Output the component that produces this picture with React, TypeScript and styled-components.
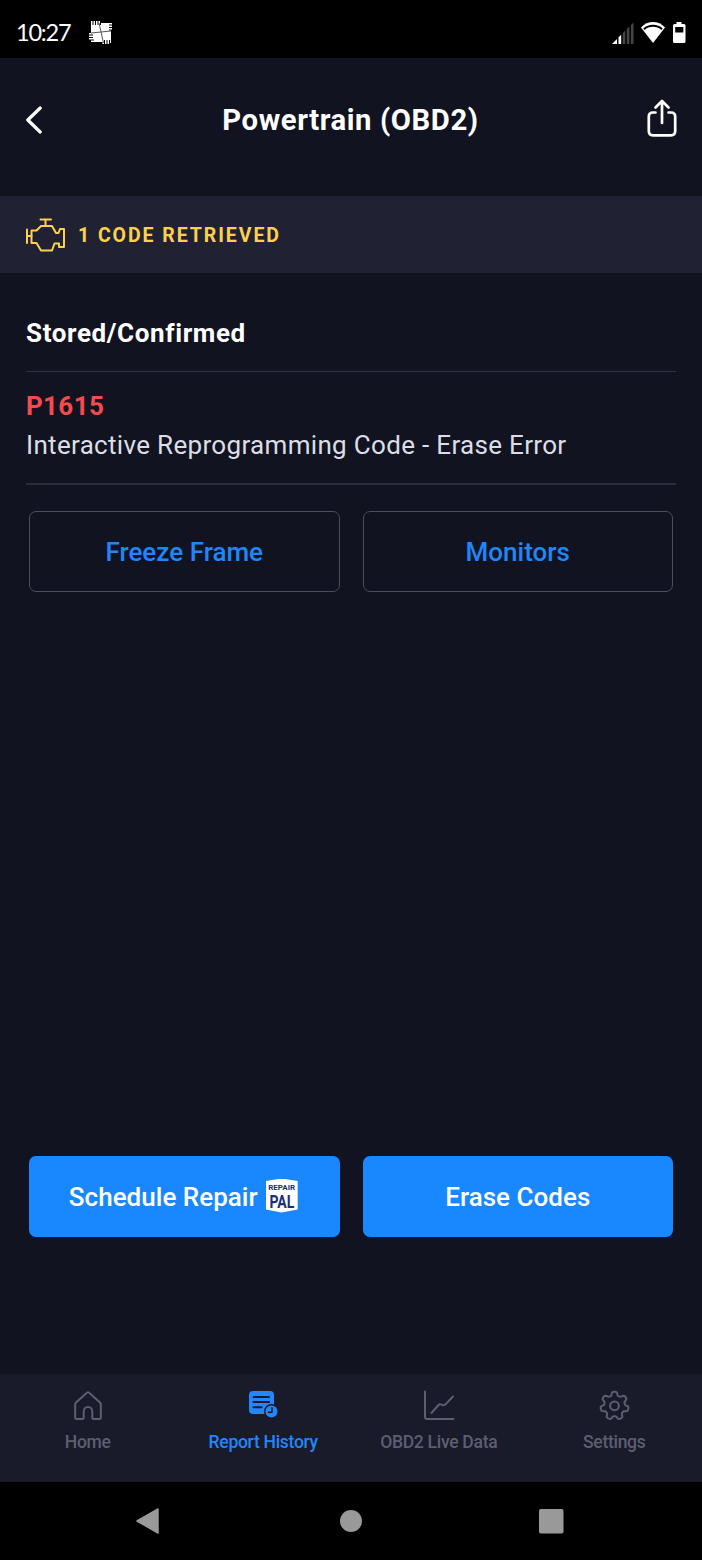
import React from 'react';
import styled, { createGlobalStyle } from 'styled-components';

const GlobalStyle = createGlobalStyle`
  * { box-sizing: border-box; }
  body { margin: 0; background: #111321; font-family: Roboto, sans-serif; }
  button { font: inherit; cursor: pointer; }
  svg { display: block; flex: none; }
`;

const Screen = styled.div`
  width: 702px;
  height: 1560px;
  display: flex;
  flex-direction: column;
  background: #111321;
  color: #fff;
`;

const StatusBar = styled.div`
  height: 58px;
  flex: none;
  display: flex;
  align-items: center;
  justify-content: space-between;
  padding: 7px 16px 0 16px;
  background: #000;
`;

const StatusGroup = styled.div<{ $gap: number }>`
  display: flex;
  align-items: center;
  gap: ${(p) => p.$gap}px;
`;

const Clock = styled.span`
  width: 54px;
  margin-top: -2px;
  font: 400 23.5px/28px Lato, sans-serif;
  letter-spacing: -1.2px;
  white-space: nowrap;
`;

const Header = styled.header`
  height: 138px;
  flex: none;
  display: flex;
  align-items: flex-start;
  justify-content: space-between;
  padding: 39px 24px 0 25px;
`;

const HeaderButton = styled.button<{ $lift?: number }>`
  width: 32px;
  height: 46px;
  margin-top: -${(p) => p.$lift ?? 0}px;
  padding: 0;
  border: 0;
  background: none;
  color: #fff;
  display: flex;
  align-items: center;
  justify-content: ${(p) => (p.$lift ? 'center' : 'flex-start')};
`;

const Title = styled.h1`
  margin: 1px 2px 0 0;
  font-size: 29.25px;
  line-height: 44px;
  font-weight: 700;
  letter-spacing: 0.6px;
`;

const Banner = styled.div`
  height: 77px;
  flex: none;
  display: flex;
  align-items: center;
  gap: 13px;
  padding: 0 25px;
  background: #202233;
  color: #ffd04c;
`;

const BannerText = styled.span`
  padding-top: 2px;
  font-size: 19.5px;
  line-height: 24px;
  font-weight: 700;
  letter-spacing: 1.93px;
`;

const Content = styled.main`
  flex: 1;
  display: flex;
  flex-direction: column;
  padding: 0 26px 137px;
`;

const SectionTitle = styled.h2`
  margin: 0;
  height: 99px;
  padding-top: 43px;
  border-bottom: 1px solid #2e3044;
  font-size: 26px;
  line-height: 34px;
  font-weight: 700;
  letter-spacing: 0.62px;
`;

const CodeItem = styled.div`
  height: 113px;
  padding-top: 15px;
  border-bottom: 2px solid #2a2c3f;
`;

const CodeId = styled.div`
  color: #f64b4e;
  font-size: 26px;
  line-height: 39px;
  font-weight: 700;
  letter-spacing: 0.35px;
`;

const CodeText = styled.div`
  color: #dcdee6;
  font-size: 26px;
  line-height: 39px;
  letter-spacing: 0.32px;
  white-space: nowrap;
`;

const ButtonRow = styled.div`
  display: grid;
  grid-template-columns: 1fr 1fr;
  gap: 23px;
  padding: 0 3px;
`;

const Spacer = styled.div<{ $size?: number }>`
  flex: ${(p) => (p.$size ? `0 0 ${p.$size}px` : '1')};
`;

const ActionButton = styled.button<{ $filled?: boolean }>`
  height: 81px;
  padding: 0;
  display: flex;
  align-items: center;
  justify-content: center;
  gap: 8px;
  border-radius: 7px;
  border: ${(p) => (p.$filled ? '0' : '1px solid #4b4d60')};
  background: ${(p) => (p.$filled ? '#1988ff' : 'transparent')};
  color: ${(p) => (p.$filled ? '#fff' : '#1f87f8')};
  font-size: 26px;
  line-height: 34px;
  font-weight: 500;
  letter-spacing: 0.02px;
`;

const TabBar = styled.nav`
  height: 108px;
  flex: none;
  display: grid;
  grid-template-columns: repeat(4, 1fr);
  background: #191a2a;
`;

const Tab = styled.a<{ $active?: boolean }>`
  display: flex;
  flex-direction: column;
  align-items: center;
  padding-top: 15px;
  gap: 10px;
  color: ${(p) => (p.$active ? '#2188fb' : '#5d5e71')};
  font-size: 17.55px;
  line-height: 22px;
  font-weight: 500;
  letter-spacing: -0.3px;
  white-space: nowrap;
`;

const SystemNav = styled.div`
  height: 78px;
  flex: none;
  display: flex;
  align-items: center;
  justify-content: space-between;
  padding: 0 138px 0 136px;
  background: #000;
  color: #999;
`;

const AppNoticeIcon = () => (
  <svg width="24" height="24" viewBox="0 0 24 24">
    <path d="M2 0h1.500v4h1V0H6v4h1V0h1.500v4h1V0H11v4h1V2h11v1.500h-3v1h3V6h-3v1h3v1.500h-3v1h2V22h-1v-3h-1v4h-1.500v-4h-1v4H16v-4h-1v4h-1.500v-2H2v-1.500h3v-1H0V17h4v-1H0v-1.500h4v-1H0V12h2z" fill="#fff" />
    <path d="M10 2 14.500 22M2 12 22 10" stroke="#555" strokeWidth="1" fill="none" />
  </svg>
);

const SignalIcon = () => (
  <svg width="22" height="22" viewBox="0 0 22 22">
    <path d="M0 22 5 17v5z" fill="#fff" />
    <path d="M6.5 15.3 9.2 12.7V22H6.5z" fill="#fff" />
    <path d="M10.7 11.2 13.3 8.6V22h-2.6zM14.8 7.1l2.6-2.6V22h-2.6zM18.9 3 21.5.4V22h-2.6z" fill="#454545" />
  </svg>
);

const WifiIcon = () => (
  <svg width="24" height="21" viewBox="0 0 24 21">
    <path d="M12 21 0 5.5C7-1.8 17-1.8 24 5.5z" fill="#fff" />
    <path d="M2.9 7.2C8 2.6 16 2.6 21.1 7.2" stroke="#000" strokeWidth="1.9" fill="none" />
  </svg>
);

const BatteryIcon = () => (
  <svg width="14" height="21" viewBox="-1 0 14 21">
    <path d="M3.500 0h5v2H11q1.500 0 1.500 1.500v16Q12.500 21 11 21H1.500Q0 21 0 19.500v-16Q0 2 1.500 2h2z" fill="#fff" />
    <path d="M2.200 5h8.100v5.500H2.200z" fill="#000" />
  </svg>
);

const BackIcon = () => (
  <svg width="18" height="28" viewBox="0 0 18 28" fill="none" stroke="currentColor" strokeWidth="3.2" strokeLinecap="round" strokeLinejoin="round">
    <path d="M15.2 2 2.800 14l12.400 12" />
  </svg>
);

const ShareIcon = () => (
  <svg width="30" height="38" viewBox="0 0 30 38" fill="none" stroke="currentColor" strokeWidth="2.7" strokeLinecap="round" strokeLinejoin="round">
    <path d="M8.5 13.5H6Q1.800 13.5 1.800 17.700V32q0 4.300 4.200 4.300h18q4.200 0 4.200-4.300V17.700q0-4.200-4.200-4.200h-2.500" />
    <path d="M15 24V2M8.500 8.500 15 2l6.500 6.500" />
  </svg>
);

const EngineIcon = () => (
  <svg width="40" height="34" viewBox="0 0 40 34" fill="none" stroke="currentColor" strokeWidth="2" strokeLinecap="round" strokeLinejoin="round">
    <path d="M15.500 1.500H26M20.500 1.500V8M2 11.500V25M2 18h4.500" />
    <path d="M6.500 12.500h5L16 8h11l4 7h2.500l1.500-4h4v18h-5v-3.500h-4.500L27 32.500H16L11.500 25h-5z" />
  </svg>
);

const RepairBadge = styled.span`
  width: 32px;
  height: 34px;
  margin: -2px 2px 0 0;
  padding-top: 4px;
  display: flex;
  flex-direction: column;
  align-items: center;
  color: #1b3078;
  background: #fff;
  clip-path: polygon(0 7%, 50% 0, 100% 7%, 100% 91%, 50% 100%, 0 91%);
  letter-spacing: 0;
`;

const BadgeSmall = styled.span`
  font: 700 8px/9px Roboto, sans-serif;
`;

const BadgeLarge = styled.span`
  font: 700 19px/19px Roboto, sans-serif;
  transform: scaleX(0.74);
`;

const HomeIcon = () => (
  <svg width="30" height="32" viewBox="0 0 30 32" fill="none" stroke="currentColor" strokeWidth="2" strokeLinejoin="round">
    <path d="M3.400 30q-1.200 0-1.200-1.200V15.500Q2.200 14.300 3 13.500L13.900 3.800q1.100-1 2.200 0L27 13.500q.8.800.8 2v13.300q0 1.200-1.200 1.200h-6.100q-1.200 0-1.200-1.200v-6.500a4.300 4.300 0 0 0-8.600 0v6.500q0 1.200-1.200 1.200z" />
  </svg>
);

const ReportIcon = () => (
  <svg width="30" height="32" viewBox="0 0 30 32">
    <rect x="1" y="2" width="25" height="23" rx="4" fill="currentColor" />
    <path d="M5.500 8h15.500M5.500 13h15.500M5.500 18.200h8" stroke="#191a2a" strokeWidth="2" strokeLinecap="round" />
    <circle cx="23.500" cy="22.500" r="7.600" fill="#191a2a" />
    <circle cx="23.500" cy="22.500" r="6" fill="currentColor" />
    <path d="M24 18.800v4.500H20.500" stroke="#191a2a" strokeWidth="1.500" fill="none" strokeLinecap="round" strokeLinejoin="round" />
  </svg>
);

const ChartIcon = () => (
  <svg width="32" height="32" viewBox="0 0 32 32" fill="none" stroke="currentColor" strokeWidth="2" strokeLinecap="round" strokeLinejoin="round">
    <path d="M2 2.500v25.300q0 2.200 2.200 2.200H30.500" />
    <path d="M8.500 24 15.500 16q1-1.200 2.400-.6l2 .8q1.300.4 2.300-.6L30 7.500" />
  </svg>
);

const TEETH = 7;
const gearPath =
  Array.from({ length: 140 }, (_, i) => {
    const angle = (i / 140) * Math.PI * 2;
    const radius = 12.2 + 1.9 * Math.tanh(2 * Math.cos(TEETH * angle) + 0.1);
    const x = 16.5 + radius * Math.sin(angle);
    const y = 16.8 - radius * Math.cos(angle);
    return `${i ? 'L' : 'M'}${x.toFixed(2)} ${y.toFixed(2)}`;
  }).join('') + 'Z';

const GearIcon = () => (
  <svg width="32" height="32" viewBox="0 0 32 32" fill="none" stroke="currentColor" strokeWidth="2" strokeLinejoin="round">
    <path d={gearPath} />
    <circle cx="16.5" cy="16.8" r="4.4" />
  </svg>
);

const TABS = [
  { label: 'Home', icon: HomeIcon },
  { label: 'Report History', icon: ReportIcon, active: true },
  { label: 'OBD2 Live Data', icon: ChartIcon },
  { label: 'Settings', icon: GearIcon },
];

export default function App() {
  return (
    <Screen>
      <GlobalStyle />
      <StatusBar>
        <StatusGroup $gap={19}>
          <Clock>10:27</Clock>
          <AppNoticeIcon />
        </StatusGroup>
        <StatusGroup $gap={7}>
          <SignalIcon />
          <WifiIcon />
          <BatteryIcon />
        </StatusGroup>
      </StatusBar>
      <Header>
        <HeaderButton aria-label="Back"><BackIcon /></HeaderButton>
        <Title>Powertrain (OBD2)</Title>
        <HeaderButton $lift={2} aria-label="Share"><ShareIcon /></HeaderButton>
      </Header>
      <Banner>
        <EngineIcon />
        <BannerText>1 CODE RETRIEVED</BannerText>
      </Banner>
      <Content>
        <SectionTitle>Stored/Confirmed</SectionTitle>
        <CodeItem>
          <CodeId>P1615</CodeId>
          <CodeText>Interactive Reprogramming Code - Erase Error</CodeText>
        </CodeItem>
        <Spacer $size={26} />
        <ButtonRow>
          <ActionButton>Freeze Frame</ActionButton>
          <ActionButton>Monitors</ActionButton>
        </ButtonRow>
        <Spacer />
        <ButtonRow>
          <ActionButton $filled>
            Schedule Repair
            <RepairBadge>
              <BadgeSmall>REPAIR</BadgeSmall>
              <BadgeLarge>PAL</BadgeLarge>
            </RepairBadge>
          </ActionButton>
          <ActionButton $filled>Erase Codes</ActionButton>
        </ButtonRow>
      </Content>
      <TabBar>
        {TABS.map(({ label, icon: Icon, active }) => (
          <Tab key={label} $active={active}>
            <Icon />
            <span>{label}</span>
          </Tab>
        ))}
      </TabBar>
      <SystemNav>
        <svg width="24" height="28" viewBox="0 0 24 28"><path d="M1 14 22 2v24z" fill="currentColor" stroke="currentColor" strokeWidth="1.5" strokeLinejoin="round" /></svg>
        <svg width="24" height="24" viewBox="0 0 24 24"><circle cx="13" cy="12" r="11" fill="currentColor" /></svg>
        <svg width="25" height="25" viewBox="0 0 25 25"><rect width="24.5" height="24.5" rx="1.8" fill="currentColor" /></svg>
      </SystemNav>
    </Screen>
  );
}
